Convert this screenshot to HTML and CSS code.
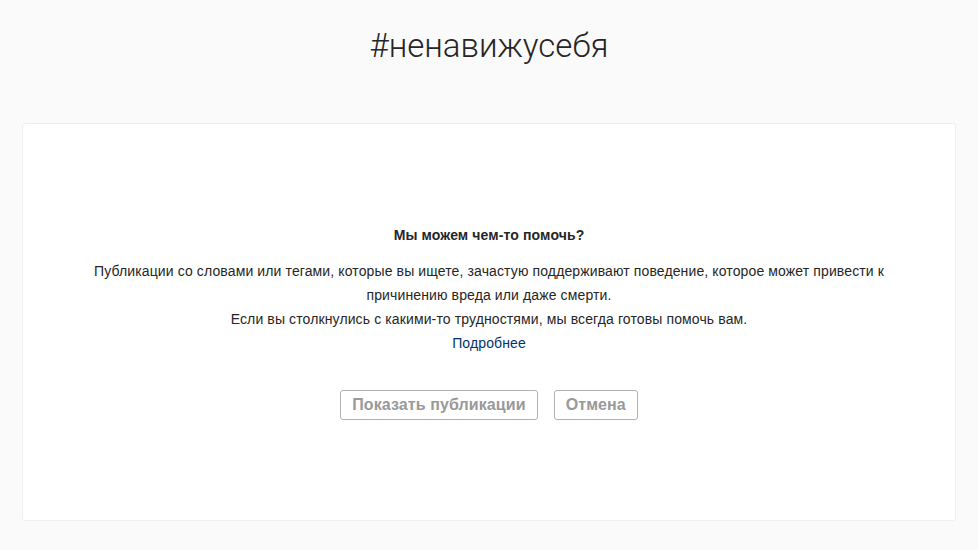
FILE: index.html
```html
<!DOCTYPE html>
<html lang="ru">
<head>
<meta charset="utf-8">
<title>#ненавижусебя</title>
<link rel="stylesheet" href="styles.css">
</head>
<body>
<main class="page">
  <header class="tag-header">
    <h1 class="tag-title">#ненавижусебя</h1>
  </header>
  <section class="notice-card">
    <div class="notice">
      <h2 class="notice-heading">Мы можем чем-то помочь?</h2>
      <p class="notice-text">Публикации со словами или тегами, которые вы ищете, зачастую поддерживают поведение, которое может привести к причинению вреда или даже смерти.</p>
      <p class="notice-text">Если вы столкнулись с какими-то трудностями, мы всегда готовы помочь вам.</p>
      <a class="notice-link" href="#">Подробнее</a>
      <div class="notice-actions">
        <button class="btn" type="button">Показать публикации</button>
        <button class="btn" type="button">Отмена</button>
      </div>
    </div>
  </section>
</main>
</body>
</html>
```
FILE: styles.css
```css
* { box-sizing: border-box; }

html, body {
  margin: 0;
  padding: 0;
  background: #fafafa;
  color: #262626;
  font-family: "Liberation Sans", Arial, sans-serif;
  font-size: 14px;
}

.page {
  width: 934px;
  margin: 0 auto;
  display: flex;
  flex-direction: column;
}

.tag-header {
  height: 123px;
  padding-top: 24px;
  display: flex;
  justify-content: center;
}

.tag-title {
  margin: 0;
  font-family: Roboto, "Liberation Sans", sans-serif;
  font-weight: 300;
  font-size: 33px;
  line-height: 44px;
  color: #262626;
}

.notice-card {
  background: #fff;
  border: 1px solid #efefef;
  border-radius: 3px;
  height: 398px;
  display: flex;
  justify-content: center;
  padding-top: 99px;
}

.notice {
  display: flex;
  flex-direction: column;
  align-items: center;
  text-align: center;
  width: 810px;
  letter-spacing: 0.12px;
}

.notice-heading {
  margin: 0 0 12px;
  font-size: 14px;
  font-weight: bold;
  line-height: 24px;
  color: #262626;
}

.notice-text {
  margin: 0;
  line-height: 24px;
  color: #262626;
}

.notice-link {
  color: #003569;
  text-decoration: none;
  line-height: 24px;
}

.notice-actions {
  display: flex;
  gap: 16px;
  margin-top: 35px;
}

.btn {
  font-family: "Liberation Sans", Arial, sans-serif;
  font-size: 16px;
  font-weight: bold;
  letter-spacing: 0.1px;
  color: #999;
  background: #fff;
  border: 1px solid #b2b2b2;
  border-radius: 3px;
  height: 30px;
  padding: 0 11px;
  line-height: 28px;
  cursor: pointer;
}
```
